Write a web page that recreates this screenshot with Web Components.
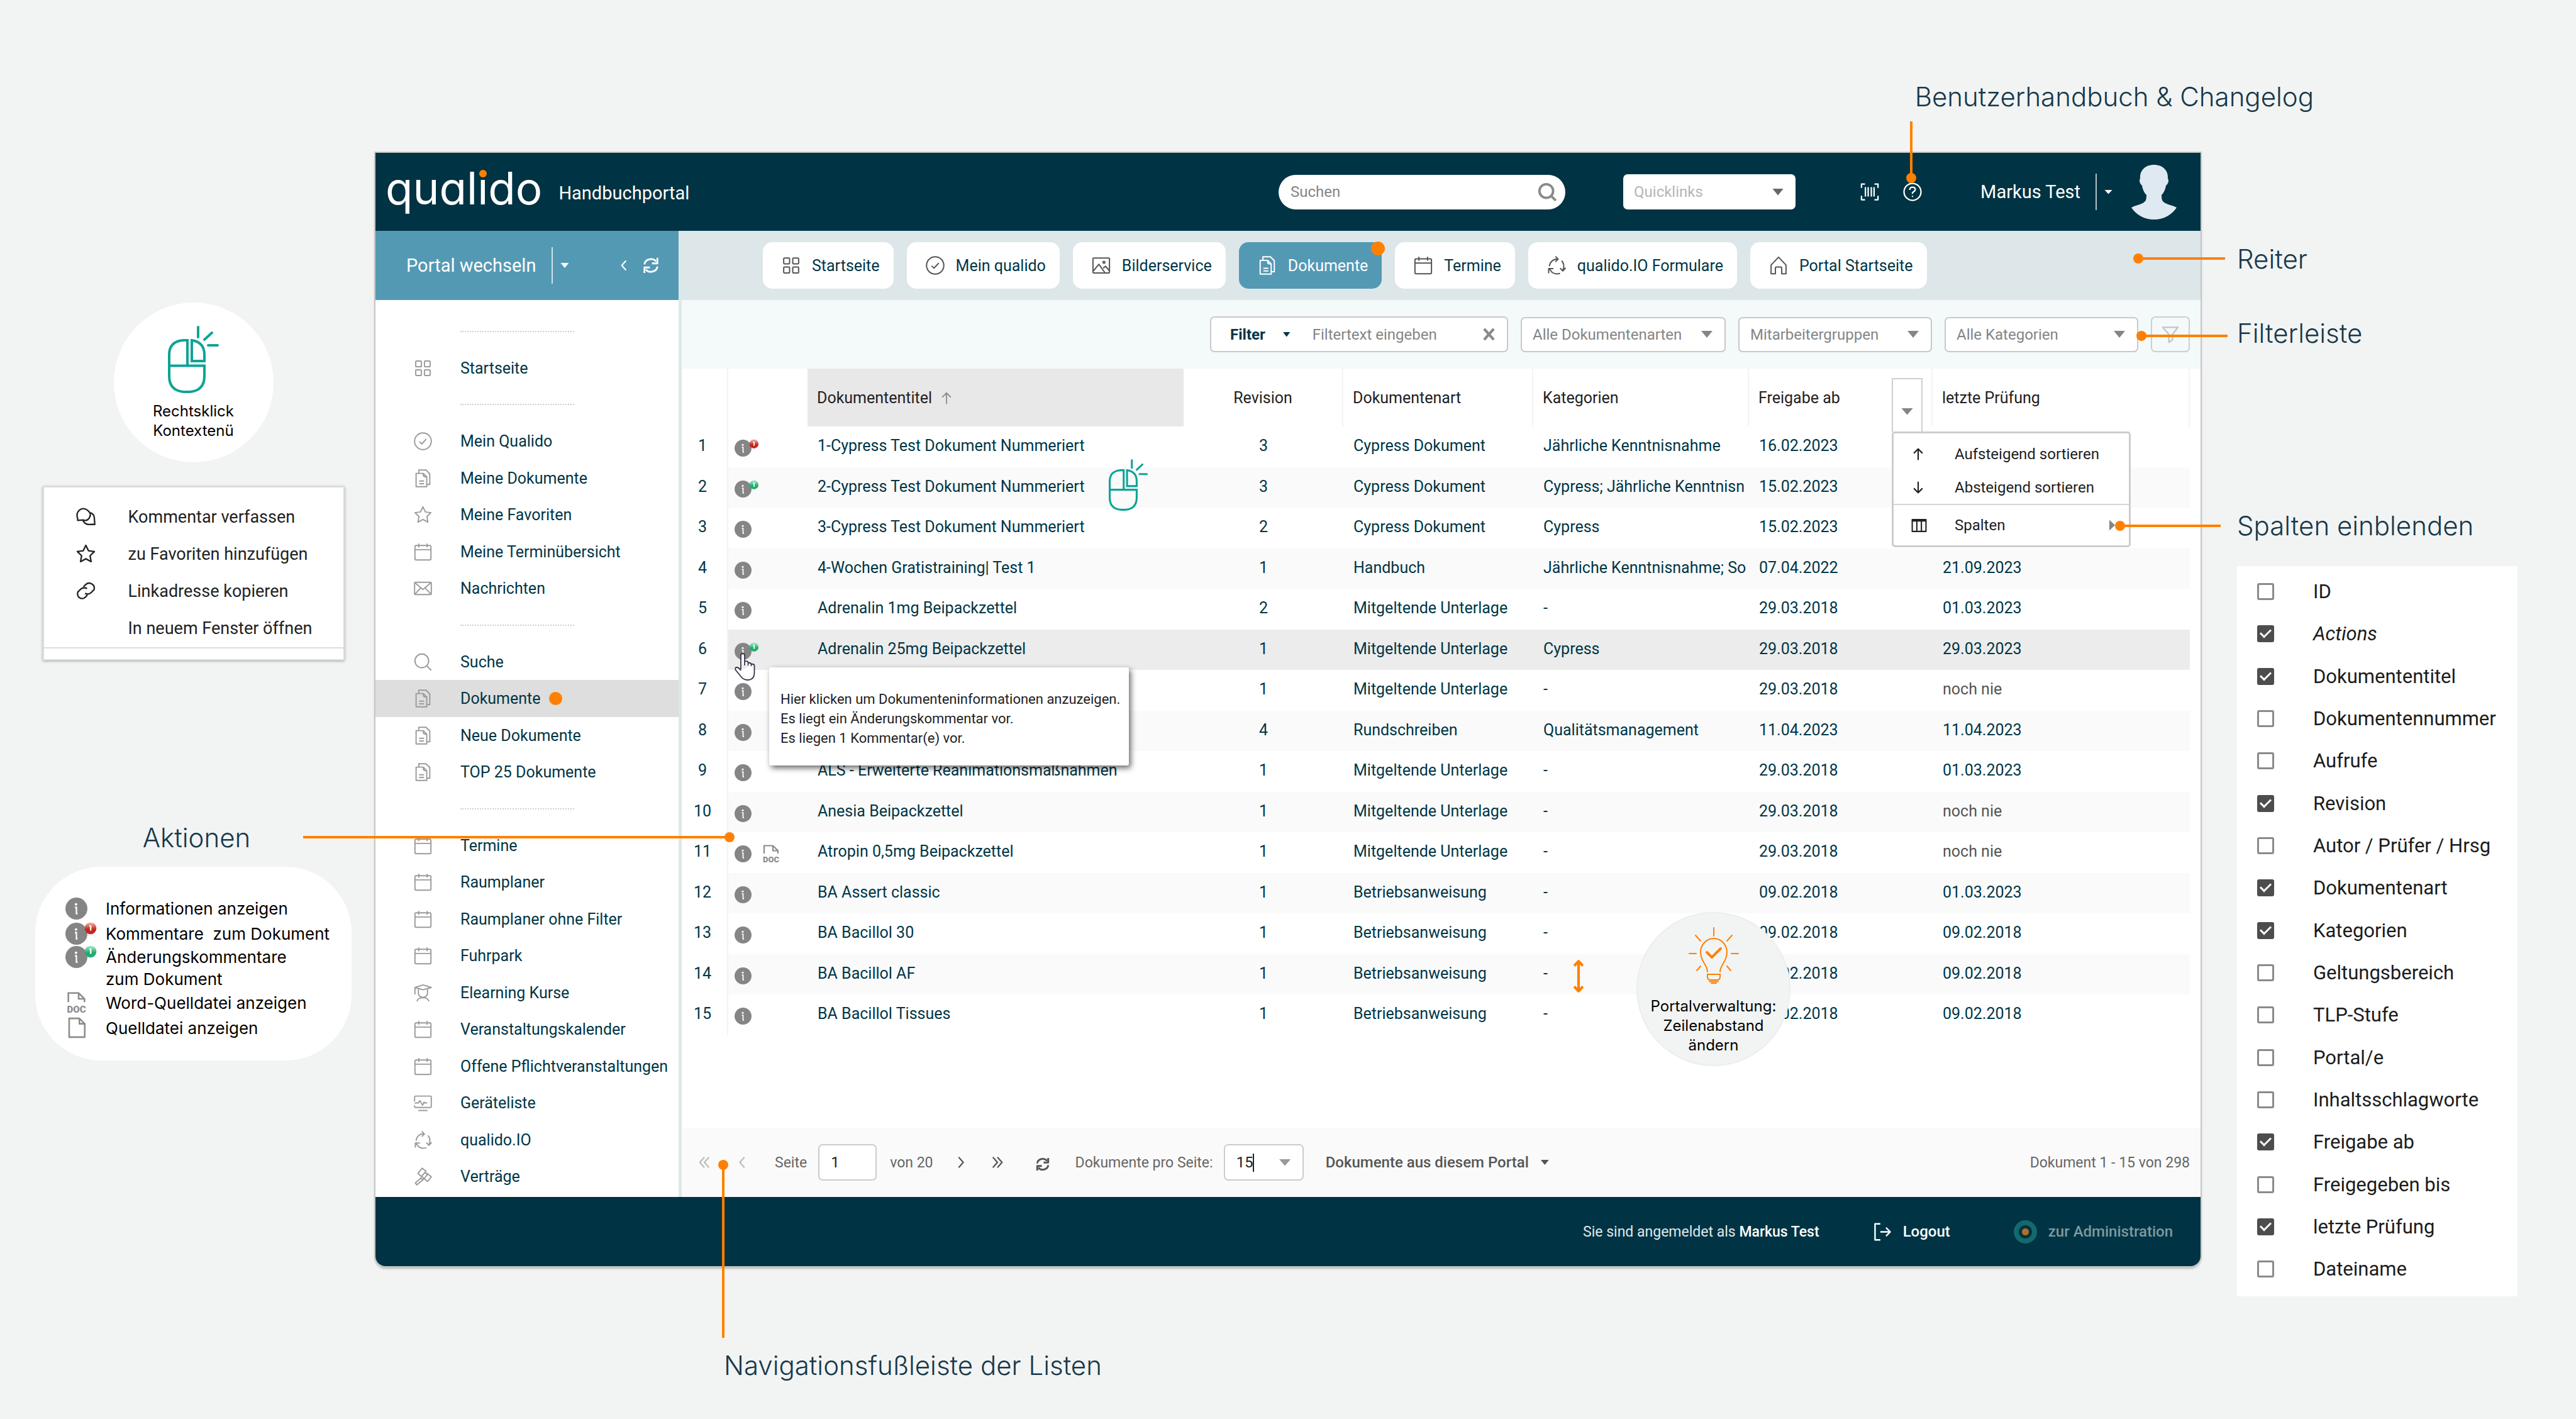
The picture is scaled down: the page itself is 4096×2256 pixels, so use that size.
<!DOCTYPE html>
<html lang="de">
<head>
<meta charset="utf-8">
<title>qualido Handbuchportal</title>
<style>
  html, body {
    margin: 0;
    background: #f2f4f3;
  }
  body {
    font-family: Roboto, "Liberation Sans", sans-serif;
    font-size: 25px;
    color: #003646;
  }
</style>
</head>
<body>
<portal-guide></portal-guide>

<script>
const icons = {
  grid: '<g><rect x="2.5" y="2.5" width="7.5" height="7.5" rx="1"/><rect x="14" y="2.5" width="7.5" height="7.5" rx="1"/><rect x="2.5" y="14" width="7.5" height="7.5" rx="1"/><rect x="14" y="14" width="7.5" height="7.5" rx="1"/></g>',
  check: '<circle cx="12" cy="12" r="11"/><path d="M7.5 12.5l3 3 6-6.5"/>',
  docs: '<path d="M3 5.5h9.5l4.5 4.5v13H3z"/><path d="M6.500 5.500V1h9.500l5 5v14h-4"/><path d="M12.500 5.500v2q0 2.500 2.500 2.500h2M7 15.500h6.500M7 19h6.500"/>',
  star: '<path d="M12 1.500l3.200 6.700 7.300 1-5.300 5.100 1.300 7.300-6.500-3.500-6.500 3.500 1.300-7.300L1.500 9.200l7.300-1z"/>',
  calendar: '<rect x="1.500" y="3.500" width="21" height="19" rx="1.500"/><path d="M1.500 9h21M6.500 1v5M17.500 1v5"/>',
  mail: '<rect x="1" y="4" width="22" height="16" rx="1"/><path d="M1.500 4.500l10.500 9 10.500-9M1.500 19.500l7.500-8M22.500 19.500l-7.500-8"/>',
  search: '<circle cx="10.500" cy="10.500" r="9"/><path d="M17 17l6 6"/>',
  student: '<path d="M1.500 5L12 1.500 23 5 12 8zM1.500 5v9"/><path d="M6 7v5.500a6 5.500 0 0 0 12 0V7M4 23q1.500-4 6-4.500h4q4.500.500 6 4.500"/>',
  monitor: '<path d="M1 10V4.500Q1 3 2.500 3h19Q23 3 23 4.500v12q0 1.500-1.500 1.500h-19Q1 18 1 16.500V15"/><path d="M1 12h5l2-3 3.500 6 2-4 1 1h3M6 22h12"/>',
  cycle: '<path d="M3 13a9.500 9.500 0 0 1 9-9h1.500M10.500.500L14 4l-3.500 3.500M18.500 6q3.500 3.500 2.500 9l-1 3.500M23.500 15L20 19l-3.500-3.500M16.500 22q-5 2-10-1l-3.500-4.500M2 22V16h6"/>',
  gavel: '<path d="M11 1l5 4-6 7-4.500-4zM17 7.500l6 5-5 6-6-5M9.500 11l4 3.500M10 13.500l-8 7 2 2.500 9-7.500M14.500 6.500l3.500 3-6 7-3.500-3"/>',
  image: '<rect x="1.500" y="2.500" width="21" height="19" rx="1"/><path d="M2 19l7-8.500 7.500 10.500M14.500 15.500l3-2.500 5 6"/><circle cx="15.500" cy="8" r="1.200"/>',
  home: '<path d="M2.500 11.500L12 1.500l9.500 10V22.500h-5.500v-7q0-1.500-1.500-1.500h-5Q8 14 8 15.500v7H2.500z"/>',
  refresh: '<path d="M2.500 10.500a9.500 8.500 0 0 1 17-4.500M21.500 13.500a9.500 8.500 0 0 1-17 4.500"/><path d="M21.500 1v8h-8M2.500 23v-8h8"/>',
  left: '<path d="M16 3l-8 9 8 9"/>',
  right: '<path d="M8 3l8 9-8 9"/>',
  first: '<path d="M12 3l-8 9 8 9M20 3l-8 9 8 9"/>',
  last: '<path d="M4 3l8 9-8 9M12 3l8 9-8 9"/>',
  up: '<path d="M12 22V3M4.500 10.500L12 3l7.500 7.500"/>',
  down: '<path d="M12 2v19M4.500 13.500L12 21l7.500-7.500"/>',
  columns: '<path d="M1.500 3h21v18h-21zM1.500 5h21M8.500 3v18M15.500 3v18"/>',
  funnel: '<path d="M1.500 2h21l-7.500 9.500V19l-5 3.500v-11z"/>',
  barcode: '<path d="M6 2H1.500v5M18 2h4.500v5M6 22H1.500v-5M18 22h4.500v-5M6.500 6v12M10 6v12M14 6v12M17.500 6v12"/>',
  help: '<circle cx="12" cy="12" r="10.800"/><path d="M8.500 9.500q0-3.500 3.500-3.500t3.500 3q0 1.700-2 2.800T12 14.500"/><path d="M12 17v1.500"/>',
  comments: '<path d="M2 14.500Q-.5 8 4 4t10 0 2.500 9-8 3l-6.500.500z"/><path d="M17.500 7q5 1.500 5 7.500l.5 7h-5q-7 1-9.500-5"/>',
  link: '<path d="M9 7l3-3q3.500-3 7.500-.500t2.500 7l-4 4q-3 2.500-7 .500M14 17l-3 3q-3 2.500-6.500.500T2 13.500l4-4q3-2.500 7.500-.5"/>',
  logout: '<path d="M9 1.500H2v21h7M9 12h13M16.500 6.500L22 12l-5.500 5.500"/>',
  file: '<path d="M3.500 1.500h11.500l6 6v15H3.500zM15 1.500v6h6"/>',
  cross: '<path d="M4 3l16 18M20 3L4 21"/>',
  updown: '<path d="M12 -14v52M4.500 -6L12 -14l7.500 8M4.500 30L12 38l7.500-8"/>'
};

// Line icons share one 24 unit grid. Size, colour and stroke come from the user.
class UiIcon extends HTMLElement {
  connectedCallback() {
    this.attachShadow({mode: 'open'}).innerHTML = `
      <style>
        :host {
          display: inline-block;
          flex: none;
          width: var(--icon-size, 28px);
          height: var(--icon-size, 28px);
        }
        svg {
          display: block;
          width: 100%;
          height: 100%;
          overflow: visible;
          fill: none;
          stroke: currentColor;
          stroke-width: var(--icon-stroke, 1.6);
          stroke-linejoin: round;
        }
      </style>
      <svg viewBox="0 0 24 24" aria-hidden="true">${icons[this.getAttribute('name')]}</svg>
    `;
  }
}
customElements.define('ui-icon', UiIcon);

class InfoIcon extends HTMLElement {
  connectedCallback() {
    const badge = this.getAttribute('badge');
    const colors = {red: ['#f3b9b4', '#c5281c'], green: ['#b4ecd2', '#1fae6d']}[badge];
    this.attachShadow({mode: 'open'}).innerHTML = `
      <style>
        :host {
          display: inline-block;
          flex: none;
          width: var(--info-size, 27px);
          height: var(--info-size, 27px);
        }
        svg {
          display: block;
          width: 100%;
          height: 100%;
          overflow: visible;
        }
      </style>
      <svg viewBox="0 0 28 28" aria-hidden="true">
        <circle cx="14" cy="14" r="14" fill="#858585"/>
        <circle cx="13.500" cy="8.500" r="1.600" fill="#fff"/>
        <path d="M12 12.500h2v8h1.500" fill="none" stroke="#fff" stroke-width="1.800"/>
        ${badge ? `
          <linearGradient id="shine" x1="0" y1="0" x2="0" y2="1">
            <stop offset="0" stop-color="${colors[0]}"/><stop offset=".6" stop-color="${colors[1]}"/>
          </linearGradient>
          <circle cx="32" cy="7" r="7.500" fill="url(#shine)"/>
          <path d="M30.500 4h1.700v6" fill="none" stroke="#fff" stroke-width="1.800"/>` : ''}
      </svg>
    `;
  }
}
customElements.define('info-icon', InfoIcon);

class DocIcon extends HTMLElement {
  connectedCallback() {
    this.attachShadow({mode: 'open'}).innerHTML = `
      <style>
        :host {
          display: inline-block;
          flex: none;
          width: var(--doc-size, 30px);
          height: var(--doc-size, 30px);
          color: #8c8c8c;
        }
        svg {
          display: block;
          width: 100%;
          height: 100%;
          overflow: visible;
        }
        text {
          font: 900 13px Roboto, sans-serif;
          fill: currentColor;
        }
      </style>
      <svg viewBox="0 0 30 30">
        <path d="M4 14V1.500h14l8 8V14M18 1.500v8h8" fill="none" stroke="currentColor" stroke-width="2.200"/>
        <text x="15" y="28" text-anchor="middle">DOC</text>
      </svg>
    `;
  }
}
customElements.define('doc-icon', DocIcon);

class MouseIcon extends HTMLElement {
  connectedCallback() {
    this.attachShadow({mode: 'open'}).innerHTML = `
      <style>
        :host {
          display: block;
          width: 81px;
        }
        svg {
          display: block;
          width: 100%;
          fill: none;
          stroke: #0fa396;
          stroke-width: 4;
          stroke-linecap: round;
        }
      </style>
      <svg viewBox="0 0 81 107" aria-hidden="true">
        <path d="M31 63V23h-7Q2 25 2 46v34q0 23 23 25h10q23-2 23-25V63.500H2"/>
        <path d="M38 23Q58 26 58 46v10H38z"/>
        <path d="M48 2v16M58 22l12-11M64 31h15"/>
      </svg>
    `;
  }
}
customElements.define('mouse-icon', MouseIcon);

class DropDown extends HTMLElement {
  connectedCallback() {
    this.attachShadow({mode: 'open'}).innerHTML = `
      <style>
        :host {
          display: grid;
          flex: none;
          align-items: center;
          height: 56px;
          box-sizing: border-box;
          background: #fff;
          border: 2px solid #c9c9c9;
          border-radius: 7px;
          color: #858585;
        }
        select, i {
          grid-area: 1 / 1;
        }
        select {
          width: 100%;
          height: 100%;
          padding: 0 40px 0 17px;
          appearance: none;
          border: 0;
          border-radius: inherit;
          background: none;
          font: 24px Roboto, sans-serif;
          color: inherit;
        }
        i {
          justify-self: end;
          width: 18px;
          height: 11px;
          margin-right: 19px;
          background: var(--caret, #858585);
          clip-path: polygon(0 0, 100% 0, 50% 100%);
          pointer-events: none;
        }
      </style>
      <select aria-label="${this.getAttribute('label')}">
        <option>${this.getAttribute('label')}</option>
      </select>
      <i></i>
    `;
  }
}
customElements.define('drop-down', DropDown);

class PortalHeader extends HTMLElement {
  connectedCallback() {
    this.attachShadow({mode: 'open'}).innerHTML = `
      <style>
        :host {
          display: flex;
          align-items: center;
          height: 124px;
          padding: 0 38px 0 16px;
          background: #003343;
          color: #fff;
          font-size: 29px;
        }
        .logo {
          font-family: Inter, sans-serif;
          font-size: 71px;
          line-height: 88px;
          font-weight: 400;
          font-feature-settings: "cv11";
          padding-bottom: 12px;
        }
        .logo span {
          position: relative;
        }
        .logo span::after {
          content: "";
          position: absolute;
          left: 0;
          right: 0;
          top: 14px;
          width: 12px;
          height: 12px;
          margin: auto;
          border-radius: 50%;
          background: #ff8000;
          box-shadow: 0 0 0 1px #003343;
        }
        .portal {
          margin-left: 26px;
          padding-top: 4px;
        }
        .search {
          display: flex;
          align-items: center;
          box-sizing: border-box;
          width: 456px;
          height: 55px;
          margin: 0 92px 0 auto;
          padding: 0 14px 0 19px;
          border-radius: 28px;
          background: #fff;
          color: #8a8a8a;
          --icon-size: 29px;
          --icon-stroke: 3.2;
        }
        input {
          flex: 1;
          min-width: 0;
          border: 0;
          padding: 0;
          background: none;
          font: 24px Roboto, sans-serif;
        }
        input::placeholder {
          color: #858585;
        }
        drop-down {
          width: 274px;
          margin-right: 103px;
          border: 0;
          color: #b5b5b5;
          --caret: #666;
        }
        button {
          display: flex;
          padding: 0;
          border: 0;
          background: none;
          color: inherit;
          font: 29px Roboto, sans-serif;
          --icon-size: 30px;
          --icon-stroke: 1.8;
        }
        .scan {
          margin-right: 38px;
        }
        .user {
          align-items: center;
          margin-left: 93px;
        }
        .user::after {
          content: "";
          width: 13px;
          height: 7px;
          margin: 0 30px 0 12px;
          background: #fff;
          clip-path: polygon(0 0, 100% 0, 50% 100%);
        }
        .user span {
          padding-right: 24px;
          border-right: 2px solid #b3c2c7;
          line-height: 58px;
        }
        svg {
          width: 72px;
          height: 87px;
        }
      </style>
      <div class="logo">qual<span>i</span>do</div>
      <div class="portal">Handbuchportal</div>
      <label class="search">
        <input type="text" placeholder="Suchen" aria-label="Suchen">
        <ui-icon name="search"></ui-icon>
      </label>
      <drop-down label="Quicklinks"></drop-down>
      <button class="scan" aria-label="Scannen"><ui-icon name="barcode"></ui-icon></button>
      <button aria-label="Hilfe"><ui-icon name="help"></ui-icon></button>
      <button class="user"><span>Markus Test</span></button>
      <svg viewBox="0 0 72 87" aria-hidden="true">
        <path fill="#dfe9f2" d="M36 0C22 0 13 9 14 22c-2 2-1 8 3 11 1 7 4 12 7 15 0 8-1 10-6 13-6 3-13 4-18 7 8 12 21 19 36 19s28-7 36-19c-5-3-12-4-18-7-5-3-6-5-6-13 3-3 6-8 7-15 4-3 5-9 3-11C59 9 50 0 36 0z"/>
      </svg>
    `;
  }
}
customElements.define('portal-header', PortalHeader);

const menu = [
  [['grid', 'Startseite']],
  [
    ['check', 'Mein Qualido'],
    ['docs', 'Meine Dokumente'],
    ['star', 'Meine Favoriten'],
    ['calendar', 'Meine Terminübersicht'],
    ['mail', 'Nachrichten']
  ],
  [
    ['search', 'Suche'],
    ['docs', 'Dokumente', 'active'],
    ['docs', 'Neue Dokumente'],
    ['docs', 'TOP 25 Dokumente']
  ],
  [
    ['calendar', 'Termine'],
    ['calendar', 'Raumplaner'],
    ['calendar', 'Raumplaner ohne Filter'],
    ['calendar', 'Fuhrpark'],
    ['student', 'Elearning Kurse'],
    ['calendar', 'Veranstaltungskalender'],
    ['calendar', 'Offene Pflichtveranstaltungen'],
    ['monitor', 'Geräteliste'],
    ['cycle', 'qualido.IO'],
    ['gavel', 'Verträge']
  ]
];

class PortalSidebar extends HTMLElement {
  connectedCallback() {
    this.attachShadow({mode: 'open'}).innerHTML = `
      <style>
        :host {
          display: block;
          width: 482px;
          background: #fff;
          border-right: 5px solid #dde8ea;
        }
        header {
          display: flex;
          align-items: center;
          height: 110px;
          padding: 0 31px 0 49px;
          box-sizing: border-box;
          background: #5499b4;
          color: #fff;
        }
        button {
          display: flex;
          align-items: center;
          padding: 0;
          border: 0;
          background: none;
          color: inherit;
          font: 29px Roboto, sans-serif;
        }
        .switch {
          flex: 1;
        }
        .switch span {
          padding-right: 25px;
          border-right: 2px solid #cfe3ea;
          line-height: 58px;
        }
        .switch::after {
          content: "";
          width: 13px;
          height: 8px;
          margin-left: 12px;
          background: #fff;
          clip-path: polygon(0 0, 100% 0, 50% 100%);
        }
        header ui-icon {
          --icon-size: 26px;
          --icon-stroke: 2.6;
        }
        .fold {
          margin-right: 20px;
          --icon-stroke: 2;
        }
        .fold ui-icon {
          --icon-size: 20px;
        }
        nav {
          padding: 21px 0 3px;
        }
        hr {
          width: 181px;
          margin: 28px 0 28px 135px;
          border: 0;
          border-top: 2px dotted #cfcfcf;
        }
        a {
          display: flex;
          align-items: center;
          height: 58px;
          padding-left: 61px;
          color: inherit;
          text-decoration: none;
          white-space: nowrap;
        }
        a:nth-of-type(even) {
          height: 59px;
        }
        a ui-icon {
          margin-right: 45px;
          color: #9b9b9b;
          --icon-size: 29px;
        }
        .active {
          background: #dedede;
        }
        .active::after {
          content: "";
          width: 21px;
          height: 21px;
          margin-left: 13px;
          border-radius: 50%;
          background: #ff8000;
        }
      </style>
      <header>
        <button class="switch"><span>Portal wechseln</span></button>
        <button class="fold" aria-label="Einklappen"><ui-icon name="left"></ui-icon></button>
        <button aria-label="Aktualisieren"><ui-icon name="refresh"></ui-icon></button>
      </header>
      <nav>
        ${menu.map(group => `<hr>${group.map(([icon, label, state]) => `
          <a href="#" class="${state || ''}"><ui-icon name="${icon}"></ui-icon>${label}</a>`).join('')}`).join('')}
      </nav>
    `;
  }
}
customElements.define('portal-sidebar', PortalSidebar);

class PortalTabs extends HTMLElement {
  connectedCallback() {
    const tabs = [
      ['grid', 'Startseite'],
      ['check', 'Mein qualido'],
      ['image', 'Bilderservice'],
      ['docs', 'Dokumente', 'active'],
      ['calendar', 'Termine'],
      ['cycle', 'qualido.IO Formulare'],
      ['home', 'Portal Startseite']
    ];
    this.attachShadow({mode: 'open'}).innerHTML = `
      <style>
        :host {
          display: flex;
          align-items: center;
          gap: 21px;
          height: 110px;
          padding-left: 129px;
          background: #dde6e9;
        }
        button {
          display: flex;
          align-items: center;
          gap: 18px;
          height: 74px;
          padding: 0 22px 0 30px;
          border: 0;
          border-radius: 15px;
          background: #fff;
          color: #003646;
          font: 25px Roboto, sans-serif;
          position: relative;
          --icon-size: 30px;
        }
        ui-icon {
          color: #555;
        }
        .active, .active ui-icon {
          background: #5499b4;
          color: #fff;
        }
        .active::after {
          content: "";
          position: absolute;
          top: -1px;
          right: -5px;
          width: 22px;
          height: 22px;
          border-radius: 50%;
          background: #ff8000;
        }
      </style>
      ${tabs.map(([icon, label, state]) => `
        <button class="${state || ''}"><ui-icon name="${icon}"></ui-icon>${label}</button>`).join('')}
    `;
  }
}
customElements.define('portal-tabs', PortalTabs);

class FilterBar extends HTMLElement {
  connectedCallback() {
    this.attachShadow({mode: 'open'}).innerHTML = `
      <style>
        :host {
          display: flex;
          align-items: center;
          justify-content: flex-end;
          gap: 20px;
          height: 109px;
          padding-right: 17px;
          background: #f4f9fa;
        }
        .filter {
          display: flex;
          align-items: center;
          box-sizing: border-box;
          width: 474px;
          height: 57px;
          padding: 0 17px 0 30px;
          background: #fff;
          border: 2px solid #c9c9c9;
          border-radius: 7px;
        }
        button {
          display: flex;
          align-items: center;
          padding: 0;
          border: 0;
          background: none;
          color: #003646;
          font: 700 24px Roboto, sans-serif;
        }
        .mode::after {
          content: "";
          width: 12px;
          height: 8px;
          margin: 0 35px 0 28px;
          background: #003646;
          clip-path: polygon(0 0, 100% 0, 50% 100%);
        }
        input {
          flex: 1;
          min-width: 0;
          padding: 0;
          border: 0;
          background: none;
          font: 24px Roboto, sans-serif;
        }
        input::placeholder {
          color: #858585;
        }
        .clear {
          color: #8a8a8a;
          --icon-size: 23px;
          --icon-stroke: 4.5;
        }
        .funnel {
          justify-content: center;
          width: 62px;
          height: 57px;
          border: 2px solid #c9d0d2;
          border-radius: 7px;
          color: #c0c6c8;
          --icon-size: 28px;
          --icon-stroke: 2;
        }
      </style>
      <div class="filter">
        <button class="mode">Filter</button>
        <input type="text" placeholder="Filtertext eingeben" aria-label="Filtertext">
        <button class="clear" aria-label="Leeren"><ui-icon name="cross"></ui-icon></button>
      </div>
      <drop-down label="Alle Dokumentenarten" style="width: 326px"></drop-down>
      <drop-down label="Mitarbeitergruppen" style="width: 308px"></drop-down>
      <drop-down label="Alle Kategorien" style="width: 308px"></drop-down>
      <button class="funnel" aria-label="Filter anwenden"><ui-icon name="funnel"></ui-icon></button>
    `;
  }
}
customElements.define('filter-bar', FilterBar);

class ColumnMenu extends HTMLElement {
  connectedCallback() {
    this.attachShadow({mode: 'open'}).innerHTML = `
      <style>
        :host {
          display: block;
          box-sizing: border-box;
          width: 380px;
          padding: 6px 0 0;
          background: #fff;
          border: 3px solid #cdcdcd;
          border-radius: 5px;
          color: #222;
        }
        button {
          display: flex;
          align-items: center;
          width: 100%;
          height: 53px;
          padding: 0 22px 0 28px;
          border: 0;
          background: none;
          color: inherit;
          font: 24px Roboto, sans-serif;
          text-align: left;
          --icon-size: 22px;
          --icon-stroke: 2.4;
        }
        span {
          flex: 1;
          margin-left: 47px;
        }
        .more {
          height: 66px;
          border-top: 2px solid #d6d6d6;
          --icon-size: 25px;
          --icon-stroke: 2;
        }
        .more span {
          margin-left: 44px;
        }
        .more::after {
          content: "";
          width: 9px;
          height: 17px;
          background: #858585;
          clip-path: polygon(0 0, 100% 50%, 0 100%);
        }
      </style>
      <button><ui-icon name="up"></ui-icon><span>Aufsteigend sortieren</span></button>
      <button><ui-icon name="down"></ui-icon><span>Absteigend sortieren</span></button>
      <button class="more"><ui-icon name="columns"></ui-icon><span>Spalten</span></button>
    `;
  }
}
customElements.define('column-menu', ColumnMenu);

const rows = [
  ['1-Cypress Test Dokument Nummeriert', 3, 'Cypress Dokument', 'Jährliche Kenntnisnahme', '16.02.2023', '', 'red'],
  ['2-Cypress Test Dokument Nummeriert', 3, 'Cypress Dokument', 'Cypress; Jährliche Kenntnisn', '15.02.2023', '', 'green'],
  ['3-Cypress Test Dokument Nummeriert', 2, 'Cypress Dokument', 'Cypress', '15.02.2023', ''],
  ['4-Wochen Gratistraining| Test 1', 1, 'Handbuch', 'Jährliche Kenntnisnahme; So', '07.04.2022', '21.09.2023'],
  ['Adrenalin 1mg Beipackzettel', 2, 'Mitgeltende Unterlage', '-', '29.03.2018', '01.03.2023'],
  ['Adrenalin 25mg Beipackzettel', 1, 'Mitgeltende Unterlage', 'Cypress', '29.03.2018', '29.03.2023', 'green'],
  ['', 1, 'Mitgeltende Unterlage', '-', '29.03.2018', 'noch nie'],
  ['', 4, 'Rundschreiben', 'Qualitätsmanagement', '11.04.2023', '11.04.2023'],
  ['ALS - Erweiterte Reanimationsmaßnahmen', 1, 'Mitgeltende Unterlage', '-', '29.03.2018', '01.03.2023'],
  ['Anesia Beipackzettel', 1, 'Mitgeltende Unterlage', '-', '29.03.2018', 'noch nie'],
  ['Atropin 0,5mg Beipackzettel', 1, 'Mitgeltende Unterlage', '-', '29.03.2018', 'noch nie', '', 'doc'],
  ['BA Assert classic', 1, 'Betriebsanweisung', '-', '09.02.2018', '01.03.2023'],
  ['BA Bacillol 30', 1, 'Betriebsanweisung', '-', '09.02.2018', '09.02.2018'],
  ['BA Bacillol AF', 1, 'Betriebsanweisung', '-', '09.02.2018', '09.02.2018'],
  ['BA Bacillol Tissues', 1, 'Betriebsanweisung', '-', '09.02.2018', '09.02.2018']
];

class DocumentTable extends HTMLElement {
  connectedCallback() {
    this.attachShadow({mode: 'open'}).innerHTML = `
      <style>
        :host {
          display: block;
          flex: 1;
          position: relative;
          background: #fff;
        }
        table {
          width: calc(100% - 17px);
          table-layout: fixed;
          border-collapse: separate;
          border-spacing: 0;
        }
        th {
          height: 92px;
          padding: 0 0 0 15px;
          border-right: 2px solid #f3f3f3;
          box-sizing: border-box;
          color: #222;
          font-weight: 400;
          text-align: left;
          position: relative;
        }
        th:nth-child(2) {
          border-right: 0;
        }
        .sorted {
          background: #e8e8e8;
          border-right-color: #e8e8e8;
        }
        .sorted ui-icon {
          margin-left: 12px;
          vertical-align: -3px;
          color: #8c8c8c;
          --icon-size: 22px;
          --icon-stroke: 2;
        }
        td {
          height: 64px;
          padding: 0 0 4px 16px;
          box-sizing: border-box;
          white-space: nowrap;
        }
        tr:nth-child(odd) td {
          height: 65px;
        }
        tr:nth-child(even) td {
          background: #fafafa;
        }
        tr:nth-child(6) td {
          background: #ececec;
        }
        tr td:first-child {
          padding-left: 0;
          padding-right: 6px;
          border-right: 2px solid #f3f3f3;
          background: none !important;
          text-align: center;
        }
        .actions {
          padding: 4px 0 0 10px;
        }
        .actions div {
          display: flex;
          align-items: center;
          gap: 16px;
        }
        th.number, td.number {
          padding-left: 0;
          text-align: center;
        }
        a {
          color: inherit;
          text-decoration: none;
        }
        .never {
          color: #555;
        }
        .trigger {
          position: absolute;
          top: 15px;
          right: 14px;
          display: flex;
          align-items: center;
          justify-content: center;
          width: 49px;
          height: 86px;
          padding: 18px 0 0;
          border: 2px solid #d0d0d0;
          border-bottom: 0;
          background: #fff;
        }
        .trigger::after {
          content: "";
          width: 19px;
          height: 11px;
          background: #858585;
          clip-path: polygon(0 0, 100% 0, 50% 100%);
        }
        column-menu {
          position: absolute;
          top: 100px;
          left: 227px;
          z-index: 2;
        }
        mouse-icon {
          position: absolute;
          top: 144px;
          left: 679px;
          width: 62px;
        }
        .hand {
          position: absolute;
          top: 452px;
          left: 83px;
          width: 34px;
          height: 44px;
        }
        [role="tooltip"] {
          position: absolute;
          top: 475px;
          left: 139px;
          box-sizing: border-box;
          width: 572px;
          padding: 35px 18px 28px;
          background: #fff;
          box-shadow: 3px 4px 10px rgba(0, 0, 0, .6);
          border-radius: 3px;
          color: #222;
          font-size: 22px;
          line-height: 31px;
          white-space: nowrap;
        }
        [role="tooltip"] p {
          margin: 0;
        }
        .spacing {
          position: absolute;
          top: 955px;
          right: 978px;
          color: #ff8000;
          --icon-size: 22px;
          --icon-stroke: 4.5;
        }
        .tip {
          position: absolute;
          top: 864px;
          right: 652px;
          display: flex;
          flex-direction: column;
          align-items: center;
          box-sizing: border-box;
          width: 245px;
          height: 245px;
          padding-top: 22px;
          border: 2px solid #ebeeed;
          border-radius: 50%;
          background: #f2f4f3;
          color: #000;
          font: 24px/31px Inter, sans-serif;
          text-align: center;
        }
        .tip svg {
          width: 80px;
          margin-bottom: 20px;
          fill: none;
          stroke: #ff8000;
          stroke-width: 2;
          stroke-linecap: round;
        }
      </style>
      <table>
        <colgroup>
          <col style="width: 74px"><col style="width: 126px"><col style="width: 598px"><col style="width: 254px">
          <col style="width: 302px"><col style="width: 343px"><col style="width: 292px"><col>
        </colgroup>
        <thead>
          <tr>
            <th></th>
            <th></th>
            <th class="sorted">Dokumententitel<ui-icon name="up"></ui-icon></th>
            <th class="number">Revision</th>
            <th>Dokumentenart</th>
            <th>Kategorien</th>
            <th>Freigabe ab
              <button class="trigger" aria-label="Spaltenmenü"></button>
              <column-menu></column-menu>
            </th>
            <th>letzte Prüfung</th>
          </tr>
        </thead>
        <tbody>
          ${rows.map(([title, revision, type, category, from, check, badge, source], i) => `
            <tr>
              <td>${i + 1}</td>
              <td class="actions"><div>
                <info-icon badge="${badge || ''}"></info-icon>${source ? '<doc-icon></doc-icon>' : ''}
              </div></td>
              <td><a href="#">${title}</a></td>
              <td class="number">${revision}</td>
              <td>${type}</td>
              <td>${category}</td>
              <td>${from}</td>
              <td class="${check === 'noch nie' ? 'never' : ''}">${check}</td>
            </tr>`).join('')}
        </tbody>
      </table>
      <mouse-icon></mouse-icon>
      <div role="tooltip">
        <p>Hier klicken um Dokumenteninformationen anzuzeigen.</p>
        <p>Es liegt ein Änderungskommentar vor.</p>
        <p>Es liegen 1 Kommentar(e) vor.</p>
      </div>
      <svg class="hand" viewBox="0 0 34 44" aria-hidden="true">
        <path fill="#fff" stroke="#34344a" stroke-width="1.800" stroke-linejoin="round" d="M11 26V4q0-3 3-3t3 3v12M17 20v-6q4-2 5.500 1v5M22.500 20v-4q4-1 5 2v3M27.500 20v-2q4-1 5 2v11q0 12-11 12-6 0-10-5l-9-11q-1-4 2-4t6.500 5"/>
      </svg>
      <ui-icon class="spacing" name="updown"></ui-icon>
      <div class="tip">
        <svg viewBox="0 0 80 90" aria-hidden="true">
          <path d="M30 71c0-11-11-16-11-31a21 22 0 1 1 42 0c0 15-11 20-11 31M30 75h20v4q0 5-5 5H35q-5 0-5-5zM33 86.500h14M36 89h8"/>
          <path d="M40 1v13M11 13l8 9M69 13l-8 9M1 42h11M68 42h11M13 69l6-7M67 69l-6-7"/>
          <path stroke-width="4" d="M29 40l8 8 14-14"/>
        </svg>
        Portalverwaltung:<br>Zeilenabstand<br>ändern
      </div>
    `;
  }
}
customElements.define('document-table', DocumentTable);

class ListPager extends HTMLElement {
  connectedCallback() {
    this.attachShadow({mode: 'open'}).innerHTML = `
      <style>
        :host {
          display: flex;
          align-items: center;
          height: 110px;
          padding: 0 17px 0 25px;
          background: #fafafa;
          color: #666;
          font-size: 23px;
          white-space: nowrap;
        }
        button {
          display: flex;
          align-items: center;
          padding: 0;
          border: 0;
          background: none;
          color: #555;
          font: 500 24px Roboto, sans-serif;
          --icon-size: 22px;
          --icon-stroke: 2.4;
        }
        button[disabled] {
          color: #bbb;
        }
        input {
          box-sizing: border-box;
          width: 93px;
          height: 58px;
          padding: 0 18px;
          border: 2px solid #ccc;
          border-radius: 7px;
          background: #fff;
          color: #222;
          font: 24px Roboto, sans-serif;
        }
        .previous { margin: 0 41px 0 38px; }
        .page { margin: 0 21px 0 18px; }
        .next { margin: 0 36px 0 33px; }
        .reload { margin: 5px 41px 0 50px; --icon-stroke: 3.2; }
        .size {
          display: flex;
          align-items: center;
          position: relative;
        }
        .size input {
          width: 127px;
          margin-left: 17px;
        }
        .size::before {
          content: "";
          position: absolute;
          right: 79px;
          width: 2px;
          height: 29px;
          background: #222;
        }
        .size::after {
          content: "";
          position: absolute;
          right: 20px;
          width: 19px;
          height: 11px;
          background: #999;
          clip-path: polygon(0 0, 100% 0, 50% 100%);
        }
        .scope {
          margin: 0 auto 0 35px;
        }
        .scope::after {
          content: "";
          width: 13px;
          height: 8px;
          margin-left: 19px;
          background: #555;
          clip-path: polygon(0 0, 100% 0, 50% 100%);
        }
      </style>
      <button disabled aria-label="Erste Seite"><ui-icon name="first"></ui-icon></button>
      <button disabled class="previous" aria-label="Vorherige Seite"><ui-icon name="left"></ui-icon></button>
      <label>Seite<input class="page" type="text" value="1"></label>
      <span>von 20</span>
      <button class="next" aria-label="Nächste Seite"><ui-icon name="right"></ui-icon></button>
      <button aria-label="Letzte Seite"><ui-icon name="last"></ui-icon></button>
      <button class="reload" aria-label="Aktualisieren"><ui-icon name="refresh"></ui-icon></button>
      <label class="size">Dokumente pro Seite:<input type="text" value="15"></label>
      <button class="scope">Dokumente aus diesem Portal</button>
      <span>Dokument 1 - 15 von 298</span>
    `;
  }
}
customElements.define('list-pager', ListPager);

class PortalFooter extends HTMLElement {
  connectedCallback() {
    this.attachShadow({mode: 'open'}).innerHTML = `
      <style>
        :host {
          display: flex;
          align-items: center;
          justify-content: flex-end;
          height: 110px;
          padding-right: 44px;
          background: #003343;
          color: #e0e8ea;
          font-size: 23px;
        }
        b {
          font-weight: 500;
          color: #fff;
        }
        a {
          display: flex;
          align-items: center;
          color: #fff;
          font-weight: 500;
          font-size: 24px;
          text-decoration: none;
        }
        .logout {
          gap: 18px;
          margin: 0 101px 0 86px;
          --icon-size: 29px;
          --icon-stroke: 2;
        }
        .admin {
          gap: 18px;
          color: #7f999f;
        }
        .admin::before {
          content: "";
          width: 37px;
          height: 37px;
          border-radius: 50%;
          background: radial-gradient(circle, #b56f1e 5px, #003343 6px 10px, #14696d 11px);
        }
      </style>
      <span>Sie sind angemeldet als <b>Markus Test</b></span>
      <a class="logout" href="#"><ui-icon name="logout"></ui-icon>Logout</a>
      <a class="admin" href="#">zur Administration</a>
    `;
  }
}
customElements.define('portal-footer', PortalFooter);

class PortalWindow extends HTMLElement {
  connectedCallback() {
    this.attachShadow({mode: 'open'}).innerHTML = `
      <style>
        :host {
          display: block;
          overflow: hidden;
          border-radius: 0 0 16px 16px;
          box-shadow: 0 0 0 2px #c6c6c6, 0 3px 4px rgba(0, 0, 0, .35);
        }
        .body {
          display: flex;
        }
        main {
          flex: 1;
          min-width: 0;
          display: flex;
          flex-direction: column;
        }
      </style>
      <portal-header></portal-header>
      <div class="body">
        <portal-sidebar></portal-sidebar>
        <main>
          <portal-tabs></portal-tabs>
          <filter-bar></filter-bar>
          <document-table></document-table>
          <list-pager></list-pager>
        </main>
      </div>
      <portal-footer></portal-footer>
    `;
  }
}
customElements.define('portal-window', PortalWindow);

// Thin orange pointer that ends in a dot on the described spot.
class GuideLine extends HTMLElement {
  connectedCallback() {
    this.attachShadow({mode: 'open'}).innerHTML = `
      <style>
        :host {
          display: block;
          position: absolute;
          z-index: 3;
          background: #ff8000;
        }
        i {
          position: absolute;
          width: 16px;
          height: 16px;
          border-radius: 50%;
          background: inherit;
        }
        :host([dot="left"]) i { left: -8px; top: -6px; }
        :host([dot="right"]) i { right: -8px; top: -6px; }
        :host([dot="top"]) i { top: -8px; left: -6px; }
        :host([dot="bottom"]) i { bottom: -8px; left: -6px; }
      </style>
      <i></i>
    `;
  }
}
customElements.define('guide-line', GuideLine);

class ContextMenu extends HTMLElement {
  connectedCallback() {
    const items = [
      ['comments', 'Kommentar verfassen'],
      ['star', 'zu Favoriten hinzufügen'],
      ['link', 'Linkadresse kopieren'],
      ['', 'In neuem Fenster öffnen']
    ];
    this.attachShadow({mode: 'open'}).innerHTML = `
      <style>
        :host {
          display: block;
          box-sizing: border-box;
          width: 480px;
          padding: 17px 0 17px;
          background: #fff;
          border: 2px solid #dcdcdc;
          box-shadow: 0 1px 4px rgba(0, 0, 0, .35);
          color: #222;
        }
        button {
          display: grid;
          grid-template-columns: 32px auto;
          column-gap: 51px;
          align-items: center;
          justify-content: start;
          width: 100%;
          height: 59px;
          padding: 0 0 0 51px;
          border: 0;
          background: none;
          color: inherit;
          font: 27px Roboto, sans-serif;
          text-align: left;
          --icon-size: 31px;
          --icon-stroke: 1.8;
        }
        span {
          grid-column: 2;
        }
        hr {
          margin: 1px 0 0;
          border: 0;
          border-top: 2px solid #dedede;
        }
      </style>
      ${items.map(([icon, label]) => `
        <button>${icon ? `<ui-icon name="${icon}"></ui-icon>` : ''}<span>${label}</span></button>`).join('')}
      <hr>
    `;
  }
}
customElements.define('context-menu', ContextMenu);

class ActionLegend extends HTMLElement {
  connectedCallback() {
    this.attachShadow({mode: 'open'}).innerHTML = `
      <style>
        :host {
          display: block;
          box-sizing: border-box;
          width: 503px;
          padding: 46px 0 32px 48px;
          border-radius: 105px;
          background: #fff;
          color: #000;
          font: 26px/35px Inter, sans-serif;
          --info-size: 35px;
          --doc-size: 35px;
        }
        ul {
          margin: 0;
          padding: 0;
          list-style: none;
        }
        li {
          display: grid;
          grid-template-columns: 36px auto;
          column-gap: 28px;
          align-items: center;
          justify-content: start;
          min-height: 40px;
        }
        li span {
          white-space: pre;
        }
        li:nth-child(3) {
          align-items: start;
        }
        ui-icon {
          justify-self: center;
          color: #8c8c8c;
          --icon-size: 34px;
          --icon-stroke: 1.8;
        }
      </style>
      <ul>
        <li><info-icon></info-icon><span>Informationen anzeigen</span></li>
        <li><info-icon badge="red"></info-icon><span>Kommentare  zum Dokument</span></li>
        <li><info-icon badge="green"></info-icon><span>Änderungskommentare<br>zum Dokument</span></li>
        <li><doc-icon></doc-icon><span>Word-Quelldatei anzeigen</span></li>
        <li><ui-icon name="file"></ui-icon><span>Quelldatei anzeigen</span></li>
      </ul>
    `;
  }
}
customElements.define('action-legend', ActionLegend);

class ColumnPicker extends HTMLElement {
  connectedCallback() {
    const columns = [
      ['ID'], ['Actions', true], ['Dokumententitel', true], ['Dokumentennummer'], ['Aufrufe'],
      ['Revision', true], ['Autor / Prüfer / Hrsg'], ['Dokumentenart', true], ['Kategorien', true],
      ['Geltungsbereich'], ['TLP-Stufe'], ['Portal/e'], ['Inhaltsschlagworte'], ['Freigabe ab', true],
      ['Freigegeben bis'], ['letzte Prüfung', true], ['Dateiname']
    ];
    this.attachShadow({mode: 'open'}).innerHTML = `
      <style>
        :host {
          display: block;
          padding: 7px 0 10px 32px;
          background: #fff;
          color: #1c1c1c;
          font-size: 31px;
        }
        label {
          display: flex;
          align-items: center;
          gap: 62px;
          height: 67px;
          white-space: nowrap;
        }
        label:nth-of-type(3n) {
          height: 68px;
        }
        label:nth-of-type(2) {
          font-style: italic;
        }
        input {
          appearance: none;
          display: grid;
          place-items: center;
          box-sizing: border-box;
          width: 27px;
          height: 27px;
          margin: 0;
          border: 3px solid #8a8a8a;
          border-radius: 3px;
          background: #fff;
        }
        input:checked {
          border-color: #4d4d4d;
          background: #4d4d4d;
        }
        input:checked::before {
          content: "";
          width: 14px;
          height: 7px;
          margin-bottom: 5px;
          border: 3px solid #fff;
          border-width: 0 0 3px 3px;
          transform: rotate(-45deg);
        }
      </style>
      ${columns.map(([name, on]) => `<label><input type="checkbox" ${on ? 'checked' : ''}>${name}</label>`).join('')}
    `;
  }
}
customElements.define('column-picker', ColumnPicker);

class PortalGuide extends HTMLElement {
  connectedCallback() {
    this.attachShadow({mode: 'open'}).innerHTML = `
      <style>
        :host {
          display: grid;
          grid-template-columns: minmax(0, 597fr) minmax(0, 2902fr) minmax(0, 597fr);
          grid-template-rows: 243px auto 1fr;
          min-height: 100vh;
          background: #f2f4f3;
        }
        h2 {
          margin: 0;
          color: #17384a;
          font: 300 42px/52px Inter, sans-serif;
          white-space: nowrap;
        }
        .top {
          grid-area: 1 / 2 / 2 / 4;
          justify-self: end;
          padding: 128px 417px 0 0;
        }
        .left {
          grid-area: 1 / 1 / 4 / 2;
          display: flex;
          flex-direction: column;
          align-items: center;
          padding: 481px 0 0 18px;
        }
        .left h2 {
          margin: 256px 0 20px;
          padding-left: 10px;
        }
        .right {
          grid-area: 1 / 3 / 4 / 4;
          padding: 386px 93px 0 58px;
        }
        .right h2 {
          margin-bottom: 66px;
        }
        .right h2:nth-of-type(2) {
          margin-bottom: 254px;
        }
        .right h2:nth-of-type(3) {
          margin-bottom: 38px;
        }
        .bottom {
          grid-area: 3 / 2;
          padding: 132px 0 0 554px;
        }
        .window {
          grid-area: 2 / 2;
          position: relative;
        }
        .click {
          display: flex;
          flex-direction: column;
          align-items: center;
          box-sizing: border-box;
          width: 254px;
          height: 254px;
          margin-bottom: 38px;
          padding-top: 37px;
          border-radius: 50%;
          background: #fff;
          color: #000;
          font: 24px/31px Inter, sans-serif;
          text-align: center;
        }
        .click mouse-icon {
          margin-bottom: 13px;
        }
        .help { width: 4px; height: 90px; top: -50px; right: 458px; }
        .tabs { width: 138px; height: 4px; top: 166px; right: -39px; }
        .filter { width: 137px; height: 4px; top: 289px; right: -43px; }
        .columns { width: 160px; height: 4px; top: 591px; right: -32px; }
        .actions { width: 678px; height: 4px; top: 1086px; left: -115px; }
        .pager { width: 4px; height: 275px; top: 1609px; left: 551px; }
      </style>
      <h2 class="top">Benutzerhandbuch &amp; Changelog</h2>
      <aside class="left">
        <div class="click"><mouse-icon></mouse-icon>Rechtsklick<br>Kontextenü</div>
        <context-menu></context-menu>
        <h2>Aktionen</h2>
        <action-legend></action-legend>
      </aside>
      <div class="window">
        <portal-window></portal-window>
        <guide-line class="help" dot="bottom"></guide-line>
        <guide-line class="tabs" dot="left"></guide-line>
        <guide-line class="filter" dot="left"></guide-line>
        <guide-line class="columns" dot="left"></guide-line>
        <guide-line class="actions" dot="right"></guide-line>
        <guide-line class="pager" dot="top"></guide-line>
      </div>
      <aside class="right">
        <h2>Reiter</h2>
        <h2>Filterleiste</h2>
        <h2>Spalten einblenden</h2>
        <column-picker></column-picker>
      </aside>
      <h2 class="bottom">Navigationsfußleiste der Listen</h2>
    `;
  }
}
customElements.define('portal-guide', PortalGuide);
</script>
</body>
</html>
